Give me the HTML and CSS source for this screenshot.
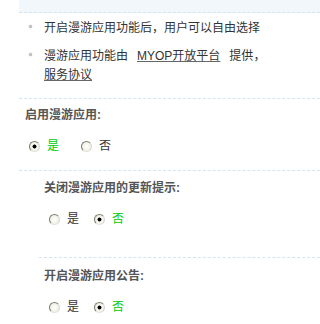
FILE: index.html
```html
<!DOCTYPE html>
<html lang="zh-CN">
<head>
<meta charset="utf-8">
<title>漫游应用设置</title>
<link rel="stylesheet" href="styles.css">
</head>
<body>
<div class="page">
  <div class="band"></div>
  <ul class="tips">
    <li>开启漫游应用功能后<span class="punct">，</span>用户可以自由选择</li>
    <li>漫游应用功能由<a href="#" class="link link-gap">MYOP开放平台</a>提供<span class="punct">，</span><br><a href="#" class="link">服务协议</a></li>
  </ul>

  <div class="setting setting-main">
    <h3 class="title">启用漫游应用:</h3>
    <div class="options">
      <label class="opt opt-wide"><input type="radio" class="radio" name="enable" checked><span class="on">是</span></label>
      <label class="opt"><input type="radio" class="radio" name="enable"><span>否</span></label>
    </div>
  </div>

  <div class="sub">
    <div class="setting setting-sub setting-tall">
      <h3 class="title">关闭漫游应用的更新提示:</h3>
      <div class="options">
        <label class="opt"><input type="radio" class="radio" name="update"><span>是</span></label>
        <label class="opt"><input type="radio" class="radio" name="update" checked><span class="on">否</span></label>
      </div>
    </div>
    <div class="setting setting-sub setting-last">
      <h3 class="title">开启漫游应用公告:</h3>
      <div class="options">
        <label class="opt"><input type="radio" class="radio" name="notice"><span>是</span></label>
        <label class="opt"><input type="radio" class="radio" name="notice" checked><span class="on">否</span></label>
      </div>
    </div>
  </div>
</div>
</body>
</html>
```

FILE: styles.css
```css
html {
  overflow: hidden;
}

body {
  margin: 0;
  background: #fff;
  color: #333;
  font-family: "Liberation Sans", "Noto Sans CJK SC", sans-serif;
  font-size: 12px;
}

.page {
  margin-left: 19px;
  overflow: hidden;
}

.band {
  height: 12px;
  background: #f2f7fc;
  border-bottom: 1px dashed #d5e4f2;
}

.tips {
  list-style: none;
  margin: 0;
  padding: 6px 0 13px;
  border-bottom: 1px dashed #d5e4f2;
}

.tips li {
  line-height: 19px;
  padding-left: 25px;
  margin-bottom: 9px;
  white-space: nowrap;
  background: radial-gradient(circle, #c4c4c4 0 1.6px, transparent 2.2px) no-repeat 9px 5px / 5px 5px;
}

.tips li:last-child {
  margin-bottom: 0;
}

.punct {
  display: inline-block;
  width: 12px;
}

.link {
  color: #333;
  text-decoration: underline;
  text-decoration-color: #666;
}

.link-gap {
  margin: 0 9px;
}

.setting {
  border-bottom: 1px dashed #d5e4f2;
}

.setting-main {
  padding: 7px 0 14px 6px;
}

.sub {
  padding-left: 20px;
}

.setting-sub {
  padding: 8px 0 13px 5px;
}

.setting-tall {
  padding-bottom: 28px;
}

.setting-last {
  border-bottom: 0;
  padding-top: 9px;
}

.title {
  margin: 0 0 12px;
  font-size: 12px;
  line-height: 19px;
  font-weight: bold;
  color: #555;
}

.options {
  display: flex;
  align-items: center;
  height: 19px;
  padding-left: 4px;
}

.setting-sub .options {
  padding-left: 5px;
}

.opt {
  display: inline-flex;
  align-items: center;
  margin-right: 15px;
  line-height: 19px;
}

.opt-wide {
  margin-right: 22px;
}

.on {
  color: #00cc00;
}

.radio {
  -webkit-appearance: none;
  appearance: none;
  box-sizing: border-box;
  width: 11px;
  height: 11px;
  margin: 0 7px 0 0;
  border-radius: 50%;
  border: 1px solid;
  border-color: #7c7c70 #d9d7ca #e6e4d9 #7c7c70;
  background: radial-gradient(circle, #ffffff 0, #f4f4ec 55%, #e0dfd3 100%);
}

.radio:checked {
  background:
    radial-gradient(circle, #000 0 1.7px, transparent 2.3px),
    radial-gradient(circle, #ffffff 0, #f4f4ec 55%, #e0dfd3 100%);
}
```
